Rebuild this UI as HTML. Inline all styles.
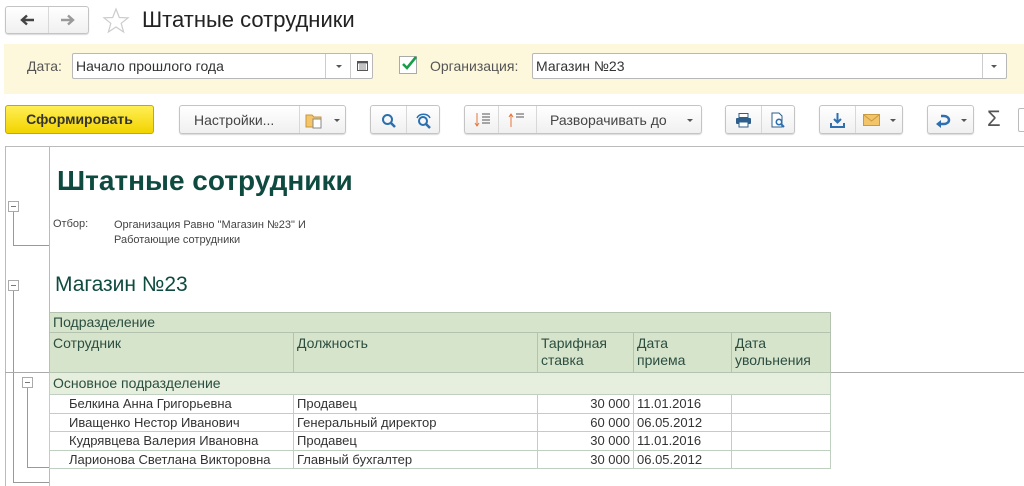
<!DOCTYPE html>
<html><head><meta charset="utf-8"><style>
*{margin:0;padding:0;box-sizing:border-box}
body{width:1024px;height:486px;background:#fff;font-family:"Liberation Sans","Noto Sans CJK SC",sans-serif;position:relative;overflow:hidden;color:#333}
.a{position:absolute}
.btn{position:absolute;border:1px solid #c4c4c4;border-radius:3px;background:linear-gradient(#fff,#f0f0f0);box-shadow:0 1px 1px rgba(0,0,0,.15)}
.dv{position:absolute;top:0;bottom:0;width:1px;background:#d8d8d8}
.t{font-size:14px;color:#444}
.caret{position:absolute;width:0;height:0;border-left:3px solid transparent;border-right:3px solid transparent;border-top:3px solid #555}
.in{position:absolute;background:#fff;border:1px solid #b8b8b8;border-radius:2px;font-size:14px;color:#333;padding:4px 0 0 3px}
table{border-collapse:collapse;position:absolute;left:49px;top:312px;font-size:13px;table-layout:fixed;width:781px}
td{border:1px solid #bfcfc0;padding:0 3px;vertical-align:top;overflow:hidden}
.h td{background:#d7e4cc;color:#2b4e40;border-color:#b4c2b0;font-size:14px}
.g td{background:#e6efdd;color:#2b4e40;font-size:14px}
.d td{height:18.5px;line-height:17px;color:#333}
.r{text-align:right}
.ln{position:absolute;background:#999}
.box{position:absolute;width:11px;height:11px;border:1px solid #aaa;background:#fff}
.box:after{content:"";position:absolute;left:2px;top:4px;width:5px;height:1px;background:#777}
</style></head><body>
<div class="btn" style="left:5px;top:6px;width:84px;height:28px"><div class="dv" style="left:42px"></div>
<svg class="a" style="left:13px;top:7px" width="16" height="12"><path d="M15 6H4M8 1.5L3 6l5 4.5" stroke="#444" stroke-width="2.4" fill="none"/></svg>
<svg class="a" style="left:54px;top:7px" width="16" height="12"><path d="M1 6h11M8 1.5L13 6l-5 4.5" stroke="#999" stroke-width="2.4" fill="none"/></svg></div>
<svg class="a" style="left:102px;top:7px" width="28" height="27"><polygon points="14,2 17.3,10.5 26,10.8 19.2,16.3 21.6,25 14,20 6.4,25 8.8,16.3 2,10.8 10.7,10.5" fill="none" stroke="#ccc" stroke-width="1.2"/></svg>
<div class="a" style="left:142px;top:7px;font-size:22px;color:#222">Штатные сотрудники</div>

<div class="a" style="left:4px;top:44px;width:1020px;height:50px;background:#fdf8dc"></div>
<div class="a t" style="left:27px;top:58px;color:#555">Дата:</div>
<div class="in" style="left:72px;top:53px;width:301px;height:26px">Начало прошлого года
<div class="dv" style="left:252px;background:#ccc"></div><div class="caret" style="left:263px;top:11px"></div>
<div class="dv" style="left:277px;background:#ccc"></div>
<svg class="a" style="left:284px;top:6px" width="11" height="11"><rect x="0.5" y="1.5" width="10" height="9" fill="none" stroke="#555"/><rect x="0.5" y="1.5" width="10" height="2" fill="#555"/><path d="M2 5h7M2 7h7M2 9h7" stroke="#888"/></svg></div>
<div class="a" style="left:399px;top:56px;width:18px;height:18px;border:1px solid #aaa;background:#fff"></div>
<svg class="a" style="left:400px;top:55px" width="18" height="18"><path d="M3 9l4 4 9-11" stroke="#1a9c4a" stroke-width="2.6" fill="none"/></svg>
<div class="a t" style="left:430px;top:58px;color:#555">Организация:</div>
<div class="in" style="left:532px;top:53px;width:475px;height:26px">Магазин №23
<div class="dv" style="left:449px;background:#ccc"></div><div class="caret" style="left:458px;top:11px"></div></div>

<div class="a" style="left:5px;top:105px;width:149px;height:29px;border:1px solid #c9a800;border-radius:3px;background:linear-gradient(#ffee55,#f2d400);font-weight:bold;font-size:14px;color:#333;text-align:center;line-height:27px">Сформировать</div>
<div class="btn" style="left:179px;top:105px;width:167px;height:29px"><span class="a t" style="left:14px;top:6px">Настройки...</span><div class="dv" style="left:119px"></div>
<svg class="a" style="left:125px;top:6px" width="20" height="17"><path d="M1 3h6l2 2h7v10H1z" fill="#f5c56a" stroke="#c9953a"/><rect x="8" y="7" width="8" height="9" fill="#fff" stroke="#888"/></svg><div class="caret" style="left:154px;top:13px"></div></div>
<div class="btn" style="left:370px;top:105px;width:70px;height:29px"><div class="dv" style="left:35px"></div>
<svg class="a" style="left:10px;top:7px" width="16" height="16"><circle cx="6.5" cy="6.5" r="4.5" stroke="#2a6fb0" stroke-width="2" fill="none"/><path d="M10 10l4 4" stroke="#2a6fb0" stroke-width="2.5"/></svg>
<svg class="a" style="left:44px;top:6px" width="18" height="18"><circle cx="8" cy="9" r="4" stroke="#2a6fb0" stroke-width="2" fill="none"/><path d="M11 12l4 4" stroke="#2a6fb0" stroke-width="2.5"/><path d="M2 6a7 6 0 0 1 13 0" stroke="#2a6fb0" stroke-width="1.5" fill="none"/></svg></div>
<div class="btn" style="left:464px;top:105px;width:238px;height:29px"><div class="dv" style="left:33px"></div><div class="dv" style="left:71px"></div>
<svg class="a" style="left:9px;top:6px" width="18" height="16"><path d="M3 1v13M1 11l2 3 2-3" stroke="#e8743b" fill="none"/><path d="M8 2h8M8 5h8M8 8h8M8 11h8" stroke="#555"/></svg>
<svg class="a" style="left:43px;top:6px" width="18" height="16"><path d="M3 15V2M1 5l2-3 2 3" stroke="#e8743b" fill="none"/><path d="M8 2h8M8 5h8" stroke="#555"/></svg>
<span class="a t" style="left:85px;top:6px">Разворачивать до</span><div class="caret" style="left:222px;top:13px"></div></div>
<div class="btn" style="left:725px;top:105px;width:70px;height:29px"><div class="dv" style="left:35px"></div>
<svg class="a" style="left:9px;top:7px" width="17" height="15"><rect x="4" y="0.5" width="9" height="4" fill="#fff" stroke="#2d5f8a"/><rect x="1" y="5" width="15" height="6" rx="1" fill="#2d5f8a"/><rect x="4" y="9" width="9" height="5" fill="#fff" stroke="#2d5f8a"/></svg>
<svg class="a" style="left:44px;top:6px" width="17" height="17"><path d="M2 1h7l3 3v11H2z" fill="#fff" stroke="#2d5f8a"/><circle cx="9" cy="10" r="2.7" stroke="#2a6fb0" stroke-width="1.6" fill="none"/><path d="M11 12l3 3" stroke="#2a6fb0" stroke-width="2"/></svg></div>
<div class="btn" style="left:819px;top:105px;width:84px;height:29px"><div class="dv" style="left:35px"></div>
<svg class="a" style="left:9px;top:6px" width="17" height="17"><path d="M8.5 1v9M5 7l3.5 3.5L12 7" stroke="#2d6fb0" stroke-width="2" fill="none"/><path d="M2 11v4h13v-4" stroke="#2d6fb0" stroke-width="2" fill="none"/></svg>
<svg class="a" style="left:43px;top:8px" width="17" height="12"><rect x="0.5" y="0.5" width="16" height="11" fill="#f4c46a" stroke="#c99a40"/><path d="M1 1l7.5 6L16 1" stroke="#c99a40" fill="none"/></svg><div class="caret" style="left:70px;top:13px"></div></div>
<div class="btn" style="left:927px;top:105px;width:47px;height:29px">
<svg class="a" style="left:7px;top:6px" width="18" height="16"><path d="M5 12h4a5 4 0 0 0 0-8H6" stroke="#2d6fb0" stroke-width="2.5" fill="none"/><path d="M1 12l5-4v8z" fill="#2d6fb0"/></svg><div class="caret" style="left:33px;top:13px"></div></div>
<div class="a" style="left:987px;top:106px;font-size:22px;color:#555">Σ</div>
<div class="a" style="left:1018px;top:108px;width:10px;height:24px;border:1px solid #bbb;border-radius:2px"></div>

<div class="ln" style="left:5px;top:146px;width:1019px;height:1px;background:#bbb"></div>
<div class="ln" style="left:5px;top:146px;width:1px;height:340px;background:#bbb"></div>
<div class="ln" style="left:49px;top:146px;width:1px;height:340px;background:#bbb"></div>
<div class="ln" style="left:13px;top:212px;width:1px;height:33px"></div><div class="ln" style="left:13px;top:245px;width:36px;height:1px"></div>
<div class="box" style="left:8px;top:201px"></div>
<div class="ln" style="left:13px;top:291px;width:1px;height:192px"></div><div class="ln" style="left:13px;top:482px;width:36px;height:1px"></div>
<div class="box" style="left:8px;top:280px"></div>
<div class="ln" style="left:5px;top:372px;width:1019px;height:1px;background:#aaa"></div>
<div class="ln" style="left:27px;top:387px;width:1px;height:80px"></div><div class="ln" style="left:27px;top:467px;width:22px;height:1px"></div>
<div class="box" style="left:22px;top:377px"></div>

<div class="a" style="left:57px;top:165px;font-size:28px;font-weight:bold;color:#0e4a3f">Штатные сотрудники</div>
<div class="a" style="left:53px;top:218px;font-size:11px;color:#444">Отбор:</div>
<div class="a" style="left:114px;top:218px;font-size:11px;color:#444;line-height:15px">Организация Равно "Магазин №23" И<br>Работающие сотрудники</div>
<div class="a" style="left:55px;top:273px;font-size:21px;color:#0e4a3f">Магазин №23</div>

<table>
<colgroup><col style="width:244px"><col style="width:244px"><col style="width:96px"><col style="width:98px"><col style="width:99px"></colgroup>
<tr class="h"><td colspan="5" style="height:20px;line-height:19px">Подразделение</td></tr>
<tr class="h" style="line-height:17px"><td style="height:40px;padding-top:2px">Сотрудник</td><td style="padding-top:2px">Должность</td><td style="padding-top:2px">Тарифная ставка</td><td style="padding-top:2px">Дата<br>приема</td><td style="padding-top:2px">Дата увольнения</td></tr>
<tr class="g"><td colspan="5" style="height:21px;line-height:21px">Основное подразделение</td></tr>
<tr class="d"><td style="padding-left:19px">Белкина Анна Григорьевна</td><td>Продавец</td><td class="r">30 000</td><td>11.01.2016</td><td></td></tr>
<tr class="d"><td style="padding-left:19px">Иващенко Нестор Иванович</td><td>Генеральный директор</td><td class="r">60 000</td><td>06.05.2012</td><td></td></tr>
<tr class="d"><td style="padding-left:19px">Кудрявцева Валерия Ивановна</td><td>Продавец</td><td class="r">30 000</td><td>11.01.2016</td><td></td></tr>
<tr class="d"><td style="padding-left:19px">Ларионова Светлана Викторовна</td><td>Главный бухгалтер</td><td class="r">30 000</td><td>06.05.2012</td><td></td></tr>
</table>
</body></html>
